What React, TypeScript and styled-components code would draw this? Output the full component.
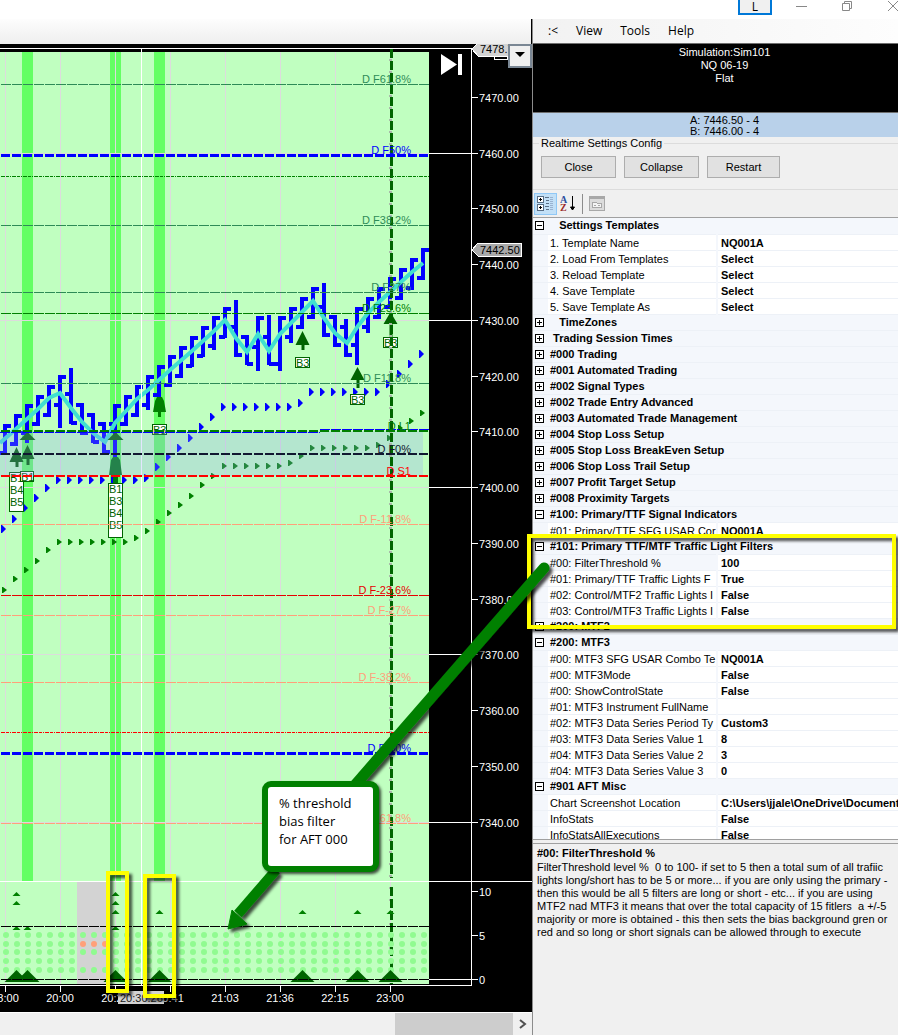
import React from "react";
import styled, { createGlobalStyle, css } from "styled-components";

const Global = createGlobalStyle`
  *, *::before, *::after { box-sizing: border-box; }
  html, body { margin: 0; padding: 0; background: #fff; }
  body { font: 11px/16px "Liberation Sans", Arial, sans-serif; color: #000; overflow: hidden; }
  button { font: inherit; color: inherit; margin: 0; padding: 0; border: 0; background: none; }
`;

const ui = `"Open Sans", "Noto Sans", sans-serif`;

const Window = styled.div`
  display: flex;
  flex-direction: column;
  height: 100vh;
  overflow: hidden;
  position: relative;
`;

/* ---------- window caption ---------- */

const Caption = styled.header`
  display: flex;
  justify-content: flex-end;
  flex: 0 0 19px;
  background: #fff;
  overflow: hidden;
`;

const LinkButton = styled.button`
  width: 34px;
  height: 15px;
  margin-right: 24px;
  border: 2px solid #0078d7;
  border-top: 0;
  background: #f0f0f0;
  font: 12px/9px ${ui};
`;

const CaptionButton = styled.button<{ $gap?: number }>`
  width: 12px;
  height: 12px;
  margin-right: ${(p) => p.$gap ?? 0}px;
  svg { display: block; }
`;

/* ---------- columns ---------- */

const Workspace = styled.div`
  flex: 1 1 0;
  min-height: 0;
  display: flex;
`;

const ChartColumn = styled.main`
  flex: 1 1 0;
  min-width: 0;
  display: flex;
  flex-direction: column;
  overflow: hidden;
  background: #000;
`;

const ChartToolbar = styled.div`
  flex: 0 0 25px;
  background: linear-gradient(#fdfdfd, #eeeeee);
  border-right: 1px solid #000;
`;

const ChartHolder = styled.div`
  flex: 1 1 0;
  min-height: 0;
  display: flex;
  justify-content: flex-end;
  position: relative;
  svg.chart { display: block; flex: none; }
`;

const AxisMenu = styled.button`
  position: absolute;
  top: 0;
  right: 0;
  width: 24px;
  height: 24px;
  border: 2px solid #7a8794;
  background: #f0f0f0;
  display: flex;
  justify-content: center;
  padding-top: 6px;
`;

const ScrollTrack = styled.div`
  flex: 0 0 23px;
  display: flex;
  justify-content: flex-end;
  background: #f0f0f0;
  border-top: 1px solid #fff;
`;

const ScrollThumb = styled.div`
  width: 118px;
  background: #cdcdcd;
`;

const ScrollButton = styled.button`
  width: 19px;
  display: flex;
  justify-content: center;
  align-items: center;
`;

const SidePanel = styled.aside`
  flex: 0 0 366px;
  min-width: 0;
  display: flex;
  flex-direction: column;
  background: #f0f0f0;
  border-left: 1px solid #8c8c8c;
`;

/* ---------- side panel: menu, account, quotes ---------- */

const MenuBar = styled.nav`
  flex: 0 0 25px;
  display: flex;
  align-items: center;
  gap: 18px;
  padding-left: 15px;
  background: linear-gradient(90deg, #f2f2f2, #fdfdfd);
  border-bottom: 1px solid #6e6e6e;
  font: 12px/16px ${ui};
`;

const Account = styled.section`
  flex: 0 0 69px;
  background: #000;
  color: #fff;
  border-bottom: 1px solid #6e6e6e;
  padding: 2px 0 0 18px;
  text-align: center;
  line-height: 13px;
`;

const Quotes = styled.section`
  flex: 0 0 24px;
  background: #b9d1ea;
  padding: 2px 0 0 18px;
  text-align: center;
  line-height: 11px;
`;

const ConfigGroup = styled.fieldset`
  flex: 0 0 53px;
  margin: 0;
  padding: 6px 0 0 8px;
  border: 1px solid #dcdcdc;
  border-width: 1px 0;
  min-width: 0;
  display: flex;
  gap: 8px;
  legend { padding: 0 2px; margin-left: -2px; line-height: 13px; }
`;

const PushButton = styled.button<{ $width?: number }>`
  width: ${(p) => p.$width ?? 75}px;
  height: 22px;
  border: 1px solid #adadad;
  background: #e1e1e1;
`;

const GridTools = styled.div`
  flex: 0 0 27px;
  display: flex;
  align-items: center;
  padding-left: 1px;
`;

const ToolButton = styled.button<{ $on?: boolean }>`
  width: 23px;
  height: 22px;
  display: flex;
  align-items: center;
  justify-content: center;
  ${(p) => p.$on && css`background: #c2e0f7; border: 1px solid #90c8f6;`}
`;

const Separator = styled.span`
  width: 1px;
  height: 20px;
  margin: 0 2px;
  background: #8c8c8c;
`;

/* ---------- property grid ---------- */

const GridFrame = styled.div`
  flex: 1 1 0;
  min-height: 0;
  overflow: hidden;
  background: #fff;
  border: 1px solid #a0a0a0;
  border-width: 1px 0;
`;

const Grid = styled.table`
  width: 100%;
  border-collapse: collapse;
  table-layout: fixed;
`;

const cell = css`
  height: 16px;
  padding: 0;
  line-height: 15px;
  text-align: left;
  white-space: pre;
  overflow: hidden;
  border-bottom: 1px solid #edf1f7;
`;

const Gutter = styled.td`
  ${cell}
  background: #f4f7fc;
  padding-left: 2px;
`;

const Category = styled.th`
  ${cell}
  background: #f4f7fc;
  padding-left: 2px;
`;

const Name = styled.th<{ $selected?: boolean }>`
  ${cell}
  font-weight: 400;
  line-height: 14px;
  padding: 1px 0 0 2px;
  border-right: 2px solid #f4f7fc;
  background: ${(p) => (p.$selected ? "#f4f7fc" : "#fff")};
`;

const Value = styled.td`
  ${cell}
  font-weight: 700;
  line-height: 14px;
  padding: 1px 0 0 3px;
`;

const Expander = styled.button`
  display: block;
  width: 9px;
  height: 9px;
  svg { display: block; }
`;

const Help = styled.section`
  flex: 0 0 192px;
  margin-top: 3px;
  border-top: 1px solid #a0a0a0;
  padding: 2px 0 0 4px;
  overflow: hidden;
  h2 { margin: 0; font-size: 11px; line-height: 15px; }
  p { margin: 0; line-height: 13px; white-space: pre; }
`;

type Row = { cat: string; open?: boolean } | { name: string; value: string; selected?: boolean };

const rows: Row[] = [
  { cat: "   Settings Templates", open: true },
  { name: "1. Template Name", value: "NQ001A" },
  { name: "2. Load From Templates", value: "Select" },
  { name: "3. Reload Template", value: "Select" },
  { name: "4. Save Template", value: "Select" },
  { name: "5. Save Template As", value: "Select" },
  { cat: "   TimeZones" },
  { cat: " Trading Session Times" },
  { cat: "#000 Trading" },
  { cat: "#001 Automated Trading" },
  { cat: "#002 Signal Types" },
  { cat: "#002 Trade Entry Advanced" },
  { cat: "#003 Automated Trade Management" },
  { cat: "#004 Stop Loss Setup" },
  { cat: "#005 Stop Loss BreakEven Setup" },
  { cat: "#006 Stop Loss Trail Setup" },
  { cat: "#007 Profit Target Setup" },
  { cat: "#008 Proximity Targets" },
  { cat: "#100: Primary/TTF Signal Indicators", open: true },
  { name: "#01: Primary/TTF SFG USAR Cor", value: "NQ001A" },
  { cat: "#101: Primary TTF/MTF Traffic Light Filters", open: true },
  { name: "#00: FilterThreshold %", value: "100", selected: true },
  { name: "#01: Primary/TTF Traffic Lights F", value: "True" },
  { name: "#02: Control/MTF2 Traffic Lights I", value: "False" },
  { name: "#03: Control/MTF3 Traffic Lights I", value: "False" },
  { cat: "#200: MTF2" },
  { cat: "#200: MTF3", open: true },
  { name: "#00: MTF3 SFG USAR Combo Te", value: "NQ001A" },
  { name: "#00: MTF3Mode", value: "False" },
  { name: "#00: ShowControlState", value: "False" },
  { name: "#01: MTF3 Instrument FullName", value: "" },
  { name: "#02: MTF3 Data Series Period Ty", value: "Custom3" },
  { name: "#03: MTF3 Data Series Value 1", value: "8" },
  { name: "#04: MTF3 Data Series Value 2", value: "3" },
  { name: "#04: MTF3 Data Series Value 3", value: "0" },
  { cat: "#901 AFT Misc", open: true },
  { name: "Chart Screenshot Location", value: "C:\\Users\\jjale\\OneDrive\\Documents" },
  { name: "InfoStats", value: "False" },
  { name: "InfoStatsAllExecutions", value: "False" },
];

const PropertyGrid = () => (
  <Grid aria-label="Settings">
    <colgroup>
      <col style={{ width: 15 }} />
      <col style={{ width: 169 }} />
      <col />
    </colgroup>
    <tbody>
      {rows.map((r, i) =>
        "cat" in r ? (
          <tr key={i}>
            <Gutter>
              <Expander aria-label={(r.open ? "Collapse " : "Expand ") + r.cat.trim()}>
                <svg width="9" height="9" shapeRendering="crispEdges">
                  <rect x="0.5" y="0.5" width="8" height="8" fill="#fff" stroke="#000" />
                  <path d={r.open ? "M2 4.5h5" : "M2 4.5h5M4.5 2v5"} stroke="#000" />
                </svg>
              </Expander>
            </Gutter>
            <Category colSpan={2} scope="rowgroup">{r.cat}</Category>
          </tr>
        ) : (
          <tr key={i}>
            <Gutter />
            <Name scope="row" $selected={r.selected}>{r.name}</Name>
            <Value>{r.value}</Value>
          </tr>
        )
      )}
    </tbody>
  </Grid>
);

/* ---------- chart data ---------- */

const STEP = 11;
const barX = (i: number) => 5 + STEP * i;

// high, low, open, close in chart pixels
const bars: [number, number, number, number][] = [
  [424, 455, 453, 426], [414, 446, 444, 416], [404, 443, 433, 406], [395, 426, 424, 397],
  [385, 417, 415, 387], [375, 428, 405, 377], [368, 424, 394, 423], [403, 435, 405, 433],
  [413, 443, 415, 442], [422, 453, 424, 452], [404, 457, 424, 406], [395, 426, 424, 397],
  [385, 417, 415, 387], [375, 410, 405, 377], [365, 397, 395, 367], [355, 387, 385, 357],
  [346, 378, 376, 348], [336, 367, 366, 338], [326, 357, 356, 328], [316, 350, 346, 318],
  [307, 338, 337, 309], [300, 357, 327, 355], [335, 365, 337, 364], [316, 371, 347, 318],
  [315, 365, 337, 364], [316, 371, 364, 318], [307, 343, 337, 309], [297, 329, 327, 299],
  [287, 319, 317, 289], [283, 337, 307, 335], [315, 347, 317, 345], [319, 357, 327, 355],
  [307, 365, 345, 309], [297, 333, 327, 299], [287, 319, 317, 289], [277, 309, 307, 279],
  [268, 300, 298, 270], [258, 290, 288, 260], [248, 280, 278, 250],
];

const zigzag =
  "0,443 16,429 27,419 38,409 49,398 60,393 71,408 82,422 93,433 105,442 115,423 126,411 137,399 148,390 170,370 192,351 214,331 225,320 236,338 247,352 258,334 269,351 280,334 291,323 313,301 324,318 335,333 347,343 358,326 368,313 379,302 390,292 401,282 412,272 423,263";

const upperStop = [
  529, 519, 508, 498, 488, 480, 480, 480, 480, 480, 480, 480, 480, 478, 467, 457, 448, 438, 427, 417,
  407, 407, 407, 407, 407, 407, 407, 403, 392, 392, 392, 392, 392, 392, 392, 384, 374, 364, 354,
];

const lowerStop = [
  590, 579, 570, 561, 550, 542, 542, 542, 542, 542, 542, 542, 538, 531, 522, 513, 505, 496, 485, 476,
  466, 466, 466, 466, 466, 466, 463, 456, 448, 448, 448, 448, 448, 448, 445, 438, 428, 421, 413,
];

type Level = { y: number; color: string; label?: string; kind?: "heavy" | "bold" | "dot" };
const sea = "#2e8b57";
const salmon = "#ffa07a";
const levels: Level[] = [
  { y: 84, color: sea, label: "D F61.8%" },
  { y: 155, color: "#0000ff", label: "D F50%", kind: "heavy" },
  { y: 176, color: "#008000", kind: "dot" },
  { y: 225, color: sea, label: "D F38.2%" },
  { y: 292, color: sea, label: "D F27%" },
  { y: 313, color: "#008000", label: "D F23.6%" },
  { y: 383, color: sea, label: "D F11.8%" },
  { y: 431, color: "#008000", label: "D L1", kind: "bold" },
  { y: 454, color: "#101830", label: "D F0%", kind: "bold" },
  { y: 476, color: "#ff0000", label: "D S1", kind: "bold" },
  { y: 524, color: salmon, label: "D F-11.8%" },
  { y: 595, color: "#e60000", label: "D F-23.6%" },
  { y: 615, color: salmon, label: "D F-27%" },
  { y: 682, color: salmon, label: "D F-38.2%" },
  { y: 732, color: "#ff0000", kind: "dot" },
  { y: 753, color: "#0000ff", label: "D F-50%", kind: "heavy" },
  { y: 823, color: salmon, label: "D F-61.8%" },
];
const thickness = { heavy: 3, bold: 2, dot: 1, thin: 1 };
const dashes = { heavy: "9 2", bold: "9 2", dot: "4 1 3 1 1 1", thin: "10 1" };

const priceTicks: [number, string][] = [
  [97, "7470.00"], [153, "7460.00"], [208, "7450.00"], [264, "7440.00"], [320, "7430.00"],
  [376, "7420.00"], [431, "7410.00"], [487, "7400.00"], [543, "7390.00"], [599, "7380.00"],
  [654, "7370.00"], [710, "7360.00"], [766, "7350.00"], [822, "7340.00"], [891, "10"],
  [935, "5"], [979, "0"],
];
const gridRows = [153, 320, 487, 654, 822];
const timeTicks: [number, string][] = [
  [5, "18:00"], [60, "20:00"], [115, "20:25"], [170, "20:41"], [225, "21:03"],
  [280, "21:36"], [335, "22:15"], [390, "23:00"],
];

const entries: { x: number; y: number; half?: number; h?: number; stem: number }[] = [
  { x: 16, y: 447, h: 15, stem: 5 },
  { x: 27, y: 445, h: 14, stem: 6 },
  { x: 27, y: 432, half: 8, h: 8, stem: 0 },
  { x: 115, y: 432, half: 8, h: 8, stem: 0 },
  { x: 302, y: 331, h: 14, stem: 5 },
  { x: 357, y: 367, h: 13, stem: 8 },
  { x: 390, y: 312, h: 12, stem: 13 },
];

const tags: { x: number; y: number; w: number; h: number; lines: string[] }[] = [
  { x: 9, y: 472, w: 14, h: 39, lines: ["B1", "B4", "B5"] },
  { x: 20, y: 471, w: 13, h: 10, lines: ["B1"] },
  { x: 108, y: 483, w: 14, h: 54, lines: ["B1", "B3", "B4", "B5"] },
  { x: 152, y: 424, w: 14, h: 10, lines: ["B3"] },
  { x: 295, y: 357, w: 14, h: 10, lines: ["B3"] },
  { x: 350, y: 394, w: 14, h: 10, lines: ["B3"] },
  { x: 383, y: 337, w: 14, h: 10, lines: ["B3"] },
];

const signals: [number, number][] = [
  [16, 894], [16, 903], [16, 928], [27, 928], [115, 894], [115, 903], [115, 912], [115, 928],
  [159, 912], [302, 912], [357, 912], [390, 912],
];
const bases = [16, 27, 115, 159, 302, 357, 390];

const PriceChart = () => (
  <svg
    className="chart"
    width="532"
    height="968"
    viewBox="0 44 532 968"
    shapeRendering="crispEdges"
    fontFamily='"Liberation Sans", Arial, sans-serif'
    fontSize="11"
    role="img"
    aria-label="NQ 06-19 price chart"
  >
    <rect x="0" y="44" width="532" height="968" fill="#000" />
    <rect x="0" y="52" width="429" height="932" fill="#c0ffc0" />
    {[22, 110, 154].map((x) => (
      <rect key={x} x={x} y="52" width="11" height="829" fill="#64ff64" />
    ))}
    <rect x="77" y="882" width="29" height="102" fill="#d3d3d3" />

    {/* grid */}
    {timeTicks.map(([x]) => (
      <rect key={x} x={x} y="52" width="1" height="932" fill="#dcdcdc" />
    ))}
    {gridRows.map((y) => (
      <g key={y}>
        <rect x="0" y={y} width="429" height="1" fill="#dcdcdc" />
        <rect x="429" y={y} width="43" height="1" fill="#fff" />
      </g>
    ))}

    {/* bars and trend line */}
    {bars.map(([hi, lo, o, c], i) => {
      const x = barX(i);
      return (
        <path
          key={i}
          d={`M${x - 2} ${hi}h4v${lo - hi}h-4zM${x - 6} ${o - 2}h6v4h-6zM${x} ${c - 2}h6v4h-6z`}
          fill="#0000ff"
        />
      );
    })}
    <polyline points={zigzag} fill="none" stroke="#40e0d0" strokeWidth="4" shapeRendering="auto" />
    <rect x="141" y="48" width="1" height="938" fill="#fff" />

    {/* stops */}
    <g shapeRendering="auto">
      {upperStop.map((y, i) => (
        <path key={i} d={`M${barX(i) - 4} ${y - 4}h1l4 4l-4 4h-1z`} fill="#0000ff" />
      ))}
      {lowerStop.map((y, i) => (
        <path key={i} d={`M${barX(i) - 3} ${y - 3}h1l4 3l-4 3h-1z`} fill="#008000" />
      ))}
    </g>

    {/* entry arrows and their tags */}
    <g shapeRendering="auto">
      {entries.map((e, i) => {
        const half = e.half ?? 7;
        const h = e.h ?? 14;
        return (
          <path
            key={i}
            d={`M${e.x + 0.5} ${e.y}l${half} ${h}h${-(half - 2)}v${e.stem}h-3v${-e.stem}h${-(half - 1)}z`}
            fill="#006400"
          />
        );
      })}
      <path d="M113 457h5l2 3l2 15h-4v8h-5v-8h-4l2-15z" fill="#007a10" />
      <path d="M157 397h5l2 4l2 11h-5v5h-3v-5h-5l2-11z" fill="#008000" />
    </g>
    {tags.map((t, i) => (
      <g key={i}>
        <rect x={t.x + 0.5} y={t.y + 0.5} width={t.w} height={t.h} fill="#fff" stroke="#006400" />
        {t.lines.map((l, n) => (
          <text key={n} x={t.x + 1} y={t.y + 10 + n * 12} fill="#006400">{l}</text>
        ))}
      </g>
    ))}

    {/* value zone */}
    <rect x="0" y="431" width="423" height="45" fill="rgba(144,155,250,0.25)" />
    <path d="M0 432.5H320M320 429.5H429" stroke="#0000ff" strokeDasharray="10 1" />

    {/* session marker */}
    <path d="M390.5 49V984" stroke="#a9b9a9" strokeWidth="3" strokeDasharray="2 10" strokeDashoffset="-10" />
    <path d="M391.5 49V878M391.5 887V984" stroke="#006400" strokeWidth="3" strokeDasharray="9 3" />

    {/* levels */}
    {levels.map((l) => {
      const kind = l.kind ?? "thin";
      const w = thickness[kind];
      return (
        <g key={l.y}>
          <path
            d={`M1 ${l.y + (w % 2 ? 0.5 : 0)}H429`}
            stroke={l.color}
            strokeWidth={w}
            strokeDasharray={dashes[kind]}
          />
          {l.label && (
            <text x="411" y={l.y - 1} textAnchor="end" fill={l.color}>{l.label}</text>
          )}
        </g>
      );
    })}

    {/* traffic light panel */}
    <g shapeRendering="auto">
      {[935, 944, 952, 961, 970].map((y, r) =>
        Array.from({ length: 39 }, (_, i) => {
          const x = 6 + STEP * i;
          const neutral = x > 77 && x < 108;
          if (neutral && r === 3) return null;
          return (
            <circle key={`${r}-${i}`} cx={x} cy={y} r="3" fill={neutral && r === 1 ? salmon : "#90fb90"} />
          );
        })
      )}
      {signals.map(([x, y], i) => (
        <path key={i} d={`M${x + 0.5} ${y - 2}l4 4h-8z`} fill="#008000" />
      ))}
      {bases.map((x) => (
        <path key={x} d={`M${x + 0.5} 970l12 12h-24z`} fill="#006400" />
      ))}
    </g>
    <path d="M1 926.5H429M1 979.5H429" stroke="#000" strokeDasharray="10 1" />

    {/* axes */}
    <path d="M0 48.5H472M471.5 48V986M0 985.5H472M0 881.5H532M429 979.5H472" stroke="#fff" fill="none" />
    {priceTicks.map(([y, label]) => (
      <g key={label}>
        <rect x="472" y={y} width="6" height="1" fill="#fff" />
        <text x="479" y={y + 5} fill="#fff">{label}</text>
      </g>
    ))}
    {timeTicks.map(([x, label]) => (
      <g key={label}>
        <rect x={x} y="986" width="1" height="6" fill="#fff" />
        <text x={x} y="1002" textAnchor="middle" fill="#fff">{label}</text>
      </g>
    ))}
    <rect x="118" y="991" width="46" height="13" fill="#d3d3d3" />
    <text x="120" y="1002" fill="#202020">20:30:26</text>

    {/* price markers */}
    <rect x="494" y="50" width="13" height="9" fill="#000" stroke="#fff" />
    <path d="M472 49l6-6h32v13h-32z" fill="#d3d3d3" stroke="#fff" />
    <text x="480" y="53">7478.75</text>
    <path d="M472 250l6-7h43v13h-43z" fill="#a9a9a9" stroke="#fff" />
    <text x="480" y="254">7442.50</text>

    {/* jump to latest */}
    <path d="M441 54l16 10.5l-16 10.5z" fill="#fff" shapeRendering="auto" />
    <rect x="458" y="54" width="4" height="21" fill="#fff" />
  </svg>
);

/* ---------- annotations over the window ---------- */

const Annotations = styled.div`
  position: absolute;
  top: 0;
  right: 0;
  width: 898px;
  height: 1035px;
  pointer-events: none;
  svg { display: block; }
`;

const Callout = styled.p`
  position: absolute;
  left: 262px;
  top: 781px;
  width: 117px;
  height: 91px;
  margin: 0;
  padding: 7px 11px;
  border: 6px solid #008000;
  border-radius: 9px;
  background: #fff;
  box-shadow: 2px 2px 3px rgba(0, 0, 0, 0.7);
  font: 13px/18px ${ui};
  white-space: pre-line;
`;

const Notes = () => (
  <Annotations>
    <svg width="898" height="1035" aria-hidden="true">
      <defs>
        <filter id="shade" x="-20%" y="-20%" width="150%" height="150%">
          <feDropShadow dx="3" dy="3" stdDeviation="1.5" floodOpacity="0.7" />
        </filter>
      </defs>
      <g filter="url(#shade)" fill="none" stroke="#ffff00" strokeWidth="4">
        <rect x="529" y="536" width="365" height="91" />
        <rect x="108" y="873" width="19" height="118" />
        <rect x="145" y="876" width="29" height="120" />
      </g>
      <g filter="url(#shade)">
        <path d="M544 568L355 785" stroke="#008000" strokeWidth="11" strokeLinecap="round" />
        <path d="M276 870L238 914" stroke="#008000" strokeWidth="10" />
        <path d="M228 929l4-19l15 14z" fill="#008000" stroke="#008000" strokeLinejoin="round" />
      </g>
    </svg>
    <Callout>{"% threshold\nbias filter\nfor AFT 000"}</Callout>
  </Annotations>
);

const help = [
  "FilterThreshold level %  0 to 100- if set to 5 then a total sum of all trafiic",
  "lights long/short has to be 5 or more... if you are only using the primary -",
  "then this would be all 5 filters are long or short - etc... if you are using",
  "MTF2 nad MTF3 it means that over the total capacity of 15 fitlers  a +/-5",
  "majority or more is obtained - this then sets the bias background gren or",
  "red and so long or short signals can be allowed through to execute",
].join("\n");

export default function App() {
  return (
    <Window>
      <Global />
      <Caption>
        <LinkButton>L</LinkButton>
        <CaptionButton $gap={33} aria-label="Minimize">
          <svg width="12" height="12"><path d="M0 6.5h11" stroke="#888" /></svg>
        </CaptionButton>
        <CaptionButton $gap={33} aria-label="Restore">
          <svg width="12" height="12" fill="none" stroke="#888">
            <path d="M1.5 3.500h7v7h-7zM3.5 3.500v-2h7v7h-2" />
          </svg>
        </CaptionButton>
        <CaptionButton aria-label="Close window">
          <svg width="12" height="12"><path d="M2 1l10 10M12 1L2 11" stroke="#888" /></svg>
        </CaptionButton>
      </Caption>
      <Workspace>
        <ChartColumn>
          <ChartToolbar />
          <ChartHolder>
            <PriceChart />
            <AxisMenu aria-label="Axis menu">
              <svg width="10" height="6"><path d="M0 0h10l-5 5z" /></svg>
            </AxisMenu>
          </ChartHolder>
          <ScrollTrack>
            <ScrollThumb />
            <ScrollButton aria-label="Scroll right">
              <svg width="8" height="10"><path d="M1 1l5 4l-5 4" fill="none" stroke="#505050" strokeWidth="2" /></svg>
            </ScrollButton>
          </ScrollTrack>
        </ChartColumn>
        <SidePanel>
          <MenuBar>
            <button>:&lt;</button>
            <button>View</button>
            <button>Tools</button>
            <button>Help</button>
          </MenuBar>
          <Account>
            <div>Simulation:Sim101</div>
            <div>NQ 06-19</div>
            <div>Flat</div>
          </Account>
          <Quotes>
            <div>A: 7446.50 - 4</div>
            <div>B: 7446.00 - 4</div>
          </Quotes>
          <ConfigGroup>
            <legend>Realtime Settings Config</legend>
            <PushButton>Close</PushButton>
            <PushButton>Collapse</PushButton>
            <PushButton $width={73}>Restart</PushButton>
          </ConfigGroup>
          <GridTools>
            <ToolButton $on aria-label="Categorized">
              <svg width="17" height="17" shapeRendering="crispEdges">
                <g fill="#fff" stroke="#5a6f86">
                  <rect x="0.5" y="1.5" width="6" height="6" />
                  <rect x="0.5" y="9.5" width="6" height="6" />
                </g>
                <path d="M2 4.5h3M3.5 3v3M2 12.5h3M3.5 11v3" stroke="#000" />
                <path d="M8 2.5h4M9 5.5h3M9 8.5h3M8 11.5h4M9 14.5h3" stroke="#5a6f86" />
                <path d="M13 2.5h3M13 4.5h3M13 6.5h3M13 8.5h3M13 10.5h3M13 12.5h3M13 14.5h3" stroke="#9ab2d0" />
              </svg>
            </ToolButton>
            <ToolButton aria-label="Alphabetical">
              <svg width="17" height="17" fontFamily='"Liberation Serif", serif' fontSize="10" fontWeight="700">
                <text x="0" y="8" fill="#2c4f9e">A</text>
                <text x="0" y="16" fill="#9c2a2a">Z</text>
                <path d="M12.5 1v13M10.5 12l2 3l2-3z" stroke="#000" fill="#000" />
              </svg>
            </ToolButton>
            <Separator />
            <ToolButton aria-label="Property pages" disabled>
              <svg width="16" height="15" fill="none" stroke="#a8a8a8" shapeRendering="crispEdges">
                <rect x="0.5" y="0.5" width="15" height="14" fill="#dcdcdc" />
                <path d="M1 2h14" strokeWidth="2" />
                <path d="M3.5 11.5v-5h4l1 1h4v4zM5 9.5h2M9 9.5h2" fill="#f4f4f4" />
              </svg>
            </ToolButton>
          </GridTools>
          <GridFrame>
            <PropertyGrid />
          </GridFrame>
          <Help>
            <h2>#00: FilterThreshold %</h2>
            <p>{help}</p>
          </Help>
        </SidePanel>
      </Workspace>
      <Notes />
    </Window>
  );
}
